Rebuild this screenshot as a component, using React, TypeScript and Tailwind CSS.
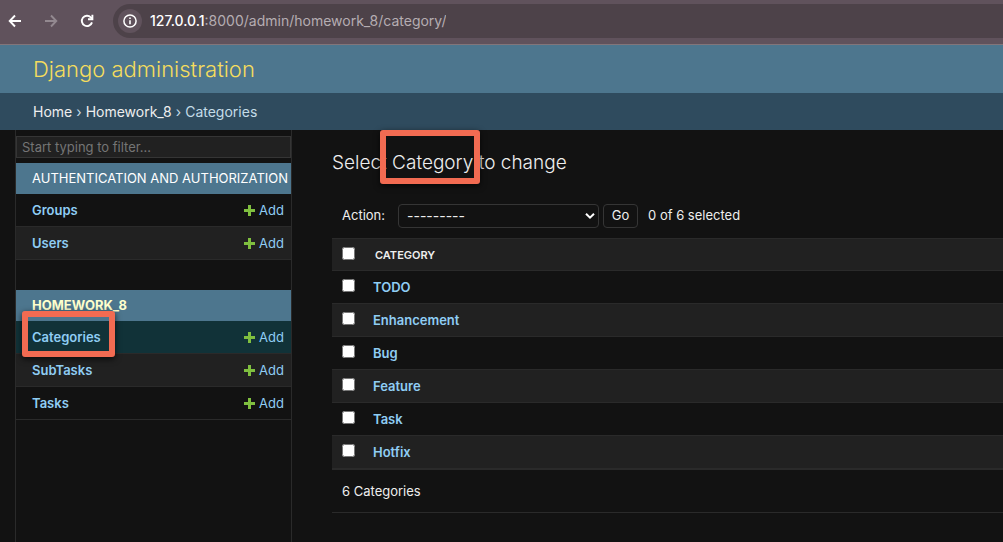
import { useState } from "react";

const rows = ["TODO", "Enhancement", "Bug", "Feature", "Task", "Hotfix"];

function Highlight({ className }: { className: string }) {
  return (
    <span
      aria-hidden="true"
      className={`pointer-events-none absolute rounded-[3px] border-6 border-[#f26b52] shadow-[0_2px_6px_rgba(0,0,0,0.7)] ${className}`}
    />
  );
}

function BrowserBar() {
  return (
    <div className="flex h-[45px] items-start border-b border-[#82757a] bg-[#60525c] pt-1 text-white">
      <div className="flex h-[34px] w-[113px] shrink-0 items-center gap-5 pl-[7px]">
        <button type="button" aria-label="Back">
          <svg width="16" height="16" viewBox="0 0 16 16" fill="none" stroke="currentColor" strokeWidth="1.9">
            <path d="M14 8H3M8 2.5 2.7 8 8 13.5" />
          </svg>
        </button>
        <button type="button" aria-label="Forward" className="text-[#938990]">
          <svg width="16" height="16" viewBox="0 0 16 16" fill="none" stroke="currentColor" strokeWidth="1.9">
            <path d="M2 8h11M8 2.5 13.3 8 8 13.5" />
          </svg>
        </button>
        <button type="button" aria-label="Reload">
          <svg width="16" height="16" viewBox="0 0 16 16" fill="none" stroke="currentColor" strokeWidth="1.9">
            <path d="M13 9.4A5.2 5.2 0 1 1 11.8 4.3L13.4 6" />
            <path d="M13.4 1.8V6.2H9" />
          </svg>
        </button>
      </div>
      <div className="flex h-[34px] min-w-0 flex-1 items-center gap-2 rounded-l-full bg-[#4d4249] pl-[5px]">
        <button
          type="button"
          aria-label="Site information"
          className="flex size-6 shrink-0 items-center justify-center rounded-full bg-[#60525c]"
        >
          <svg width="16" height="16" viewBox="0 0 16 16" fill="none" stroke="currentColor" strokeWidth="1.5">
            <circle cx="8" cy="8" r="6.1" />
            <path d="M8 7.2v4M8 4.5v1.6" strokeWidth="1.6" />
          </svg>
        </button>
        <p className="truncate text-sm text-[#b5adb2]">
          <span className="font-medium text-white">127.0.0.1</span>:8000/admin/homework_8/category/
        </p>
      </div>
    </div>
  );
}

function ModelRow({ name, className, current }: { name: string; className: string; current?: boolean }) {
  return (
    <tr className={`h-[33px] text-[13px] text-[#8fcdf4] ${className}`}>
      <th scope="row" className="border-b border-[#2a2a2a] pt-[2px] pl-4 text-left font-semibold">
        <span className="relative">
          <a href="#" aria-current={current ? "page" : undefined}>
            {name}
          </a>
          {current && <Highlight className="-top-[18px] -right-[14px] -bottom-[12px] -left-[10px]" />}
        </span>
      </th>
      <td className="border-b border-[#2a2a2a] pt-[2px] pr-[7px]">
        <a href="#" className="flex items-center justify-end gap-1">
          <svg className="mb-[2px]" width="11" height="11" viewBox="0 0 11 11" fill="#7fbf3f" aria-hidden="true">
            <path d="M4 0h3v4h4v3H7v4H4V7H0V4h4z" />
          </svg>
          Add
        </a>
      </td>
    </tr>
  );
}

const captionClass = "h-[31px] bg-[#4d768e] pl-4 text-left text-[13px] leading-[31px] whitespace-nowrap";

function Sidebar() {
  return (
    <nav aria-label="Sidebar" className="ml-[15px] w-[277px] shrink-0 border-x border-[#2a2a2a] pt-[6px]">
      <input
        type="text"
        aria-label="Filter navigation items"
        placeholder="Start typing to filter…"
        className="block h-[22px] w-full border border-[#353535] bg-[#212121] px-[5px] text-[13px] text-[#eee] placeholder:text-[#757575]"
      />
      <table className="mt-[5px] w-full border-separate border-spacing-0">
        <caption className={`${captionClass} text-white`}>
          <a href="#">AUTHENTICATION AND AUTHORIZATION</a>
        </caption>
        <tbody>
          <ModelRow name="Groups" className="bg-[#121212]" />
          <ModelRow name="Users" className="bg-[#212121]" />
        </tbody>
      </table>
      <table className="mt-[30px] w-full border-separate border-spacing-0">
        <caption className={`${captionClass} font-bold text-[#ffffcc]`}>
          <a href="#">HOMEWORK_8</a>
        </caption>
        <tbody>
          <ModelRow name="Categories" className="bg-[#113238]" current />
          <ModelRow name="SubTasks" className="bg-[#212121]" />
          <ModelRow name="Tasks" className="bg-[#121212]" />
        </tbody>
      </table>
    </nav>
  );
}

function Checkbox({ label, checked, onChange }: { label: string; checked: boolean; onChange: () => void }) {
  return (
    <input
      type="checkbox"
      aria-label={label}
      checked={checked}
      onChange={onChange}
      className="block size-[13px]"
    />
  );
}

export default function App() {
  const [selected, setSelected] = useState<string[]>([]);
  const toggle = (name: string) =>
    setSelected((s) => (s.includes(name) ? s.filter((n) => n !== name) : [...s, name]));
  const all = selected.length === rows.length;

  return (
    <div className="flex min-h-screen flex-col bg-[#121212] font-['Inter','Liberation_Sans',sans-serif] text-[13px] text-[#eee]">
      <BrowserBar />
      <header className="flex h-12 items-center bg-[#4d768e] px-[33px] pt-px text-[22px] font-light text-[#f5dd5d]">
        <a href="#">Django administration</a>
      </header>
      <nav aria-label="Breadcrumbs" className="flex h-[37px] items-center gap-1 bg-[#2f4b5e] px-[33px] pt-px text-sm text-[#c4dce8]">
        <a href="#" className="text-[#eee]">Home</a>
        <span>›</span>
        <a href="#" className="text-[#eee]">Homework_8</a>
        <span>›</span>
        <span>Categories</span>
      </nav>
      <div className="flex flex-1">
        <Sidebar />
        <main className="min-w-0 flex-1 pt-[21px] pl-10">
          <h1 className="text-[19px] leading-6 font-light">
            Select{" "}
            <span className="relative">
              Category
              <Highlight className="-top-[21px] -right-[7px] -bottom-[10px] -left-[12px]" />
            </span>{" "}
            to change
          </h1>
          <div className="mt-[29px] flex h-6 items-center pl-[10px]">
            <label htmlFor="action">Action:</label>
            <div className="relative ml-[13px]">
              <select
                id="action"
                className="block h-6 w-[201px] appearance-none rounded border border-[#353535] bg-[#121212] px-2 text-sm leading-5"
              >
                <option>---------</option>
                <option>Delete selected Categories</option>
              </select>
              <svg
                className="pointer-events-none absolute top-2 right-1"
                width="10"
                height="8"
                viewBox="0 0 10 8"
                fill="none"
                stroke="#fff"
                strokeWidth="2"
                aria-hidden="true"
              >
                <path d="M1 1.7 5 5.7 9 1.7" />
              </svg>
            </div>
            <button type="button" className="ml-1 h-6 w-[35px] rounded border border-[#353535]">
              Go
            </button>
            <span className="ml-[10px]">{selected.length} of 6 selected</span>
          </div>
          <table className="mt-[10px] w-full border-separate border-spacing-0">
            <thead>
              <tr className="h-[33px] bg-[#212121] text-[11px]">
                <th scope="col" className="w-[41px] border-y border-[#2a2a2a] pb-[2px] pl-[10px]">
                  <Checkbox
                    label="Select all"
                    checked={all}
                    onChange={() => setSelected(all ? [] : rows)}
                  />
                </th>
                <th scope="col" className="border-y border-[#2a2a2a] pt-[2px] pl-[2px] text-left font-semibold">
                  CATEGORY
                </th>
              </tr>
            </thead>
            <tbody>
              {rows.map((name) => (
                <tr key={name} className="h-[33px] odd:bg-[#121212] even:bg-[#212121]">
                  <td className="border-b border-[#2a2a2a] pb-[3px] pl-[10px]">
                    <Checkbox
                      label={`Select ${name}`}
                      checked={selected.includes(name)}
                      onChange={() => toggle(name)}
                    />
                  </td>
                  <th scope="row" className="border-b border-[#2a2a2a] pt-[2px] text-left font-semibold text-[#8fcdf4]">
                    <a href="#">{name}</a>
                  </th>
                </tr>
              ))}
            </tbody>
          </table>
          <p className="flex h-11 items-center border-y border-[#2a2a2a] pt-[2px] pl-[10px]">6 Categories</p>
        </main>
      </div>
    </div>
  );
}
